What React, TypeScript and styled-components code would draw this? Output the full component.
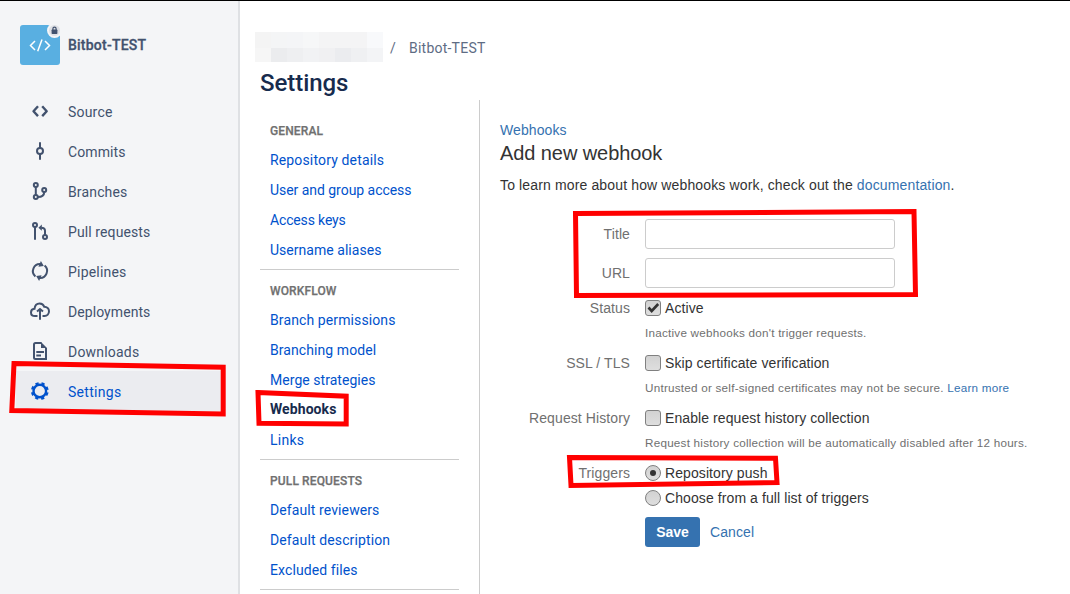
import React from 'react';
import styled, { createGlobalStyle } from 'styled-components';

const GlobalStyle = createGlobalStyle`
  *, *::before, *::after { box-sizing: border-box; }
  body { margin: 0; background: #fff; overflow: hidden; }
  a { text-decoration: none; }
`;

const roboto = `Roboto, 'Noto Sans', sans-serif`;
const liberation = `'Liberation Sans', Arial, sans-serif`;

const Page = styled.div`
  position: relative;
  display: flex;
  width: 1070px;
  height: 594px;
  overflow: hidden;
  border-top: 1px solid #000;
  font-family: ${roboto};
  font-size: 14px;
`;

const Sidebar = styled.aside`
  flex: 0 0 240px;
  padding: 24px 14px 0 16px;
  background: #f4f5f7;
  border-right: 2px solid #dfe1e4;
`;

const RepoHeader = styled.div`
  display: flex;
  align-items: center;
  gap: 8px;
  height: 40px;
  padding-left: 4px;
`;

const RepoAvatar = styled.div`
  position: relative;
  width: 40px;
  height: 40px;
  border-radius: 3px;
  background: #59afe1;
`;

const LockBadge = styled.span`
  position: absolute;
  top: -2px;
  right: -2px;
  display: flex;
  width: 15px;
  height: 15px;
`;

const RepoName = styled.span`
  color: #42526e;
  font-weight: 500;
  line-height: 20px;
  letter-spacing: 0.23px;
  -webkit-text-stroke: 0.3px #42526e;
`;

const SideNav = styled.nav`
  display: flex;
  flex-direction: column;
  margin-top: 26px;
`;

const SideLink = styled.a<{ $active?: boolean }>`
  display: flex;
  align-items: center;
  gap: 16px;
  height: 40px;
  padding-left: 12px;
  color: ${(p) => (p.$active ? '#0052cc' : '#42526e')};
  background: ${(p) => (p.$active ? '#ebecf0' : 'transparent')};
`;

const SideLabel = styled.span<{ $spacing?: number }>`
  padding-top: 2px;
  line-height: 20px;
  letter-spacing: ${(p) => p.$spacing ?? 0}px;
`;

const Content = styled.main`
  display: flex;
  flex-direction: column;
  flex: 1;
  min-width: 0;
`;

const Breadcrumbs = styled.div`
  display: flex;
  align-items: center;
  height: 30px;
  margin: 31px 0 0 15px;
  color: #5e6c84;
  letter-spacing: 0.23px;
`;

const Redacted = styled.div`
  display: grid;
  grid-template-columns: repeat(8, 16px);
  grid-template-rows: 16px 14px;
`;

const RedactedCell = styled.span<{ $tone: string }>`
  background: ${(p) => p.$tone};
`;

const Slash = styled.span`
  width: 26px;
  padding: 2px 0 0 7px;
`;

const Crumb = styled.span`
  padding-top: 2px;
`;

const PageTitle = styled.h1`
  margin: 7px 0 0 20px;
  color: #172b4d;
  font-size: 24px;
  font-weight: 500;
  line-height: 28px;
  letter-spacing: -0.05px;
`;

const Columns = styled.div`
  display: flex;
  flex: 1;
  margin-top: 3px;
`;

const SettingsNav = styled.nav`
  flex: 0 0 240px;
  padding: 10px 20px 0;
  border-right: 1px solid #ccc;
`;

const NavGroup = styled.section`
  padding: 0 10px 4px;
  border-bottom: 1px solid #ccc;
`;

const NavHeading = styled.h2`
  height: 35px;
  margin: 0;
  padding-top: 12px;
  color: #707070;
  font-size: 12px;
  font-weight: 500;
  line-height: 18px;
  letter-spacing: 0.13px;
  text-transform: uppercase;
  -webkit-text-stroke: 0.25px #707070;
`;

const NavLink = styled.a<{ $active?: boolean; $spacing: number }>`
  display: block;
  height: 30px;
  padding-top: ${(p) => (p.$active ? 4 : 5)}px;
  color: ${(p) => (p.$active ? '#172b4d' : '#0052cc')};
  font-weight: ${(p) => (p.$active ? 700 : 400)};
  line-height: 20px;
  letter-spacing: ${(p) => p.$spacing}px;
`;

const Panel = styled.section`
  flex: 1;
  padding: 20px 0 0 20px;
  color: #333;
  font-family: ${liberation};
  letter-spacing: 0.09px;
`;

const TextLink = styled.a`
  color: #3572b0;
`;

const PanelTitle = styled.h2`
  margin: 0;
  color: #333;
  font-size: 20px;
  font-weight: 400;
  line-height: 26px;
  letter-spacing: -0.08px;
`;

const Line = styled.p`
  margin: 0;
  line-height: 20px;
`;

const Intro = styled(Line)`
  margin-top: 9px;
  letter-spacing: 0.14px;
`;

const Form = styled.form`
  display: flex;
  flex-direction: column;
  margin-top: 24px;
`;

const Field = styled.div<{ $height: number }>`
  display: grid;
  grid-template-columns: 130px 1fr;
  column-gap: 15px;
  align-content: start;
  height: ${(p) => p.$height}px;
`;

const FieldLabel = styled.label<{ $offset?: number }>`
  padding-top: ${(p) => p.$offset ?? 0}px;
  color: #707070;
  line-height: 20px;
  text-align: right;
`;

const TextInput = styled.input`
  width: 250px;
  height: 30px;
  padding: 4px;
  border: 1px solid #ccc;
  border-radius: 3px;
  background: #fff;
`;

const Option = styled.label`
  display: flex;
  align-items: center;
  gap: 4px;
  height: 20px;
  line-height: 20px;
  white-space: nowrap;
`;

const Box = styled.span<{ $round?: boolean }>`
  display: flex;
  align-items: center;
  justify-content: center;
  width: 16px;
  height: 16px;
  border: 1px solid #808080;
  border-radius: ${(p) => (p.$round ? '50%' : '3px')};
  background: linear-gradient(#d2d2d2, #dedede);
`;

const Dot = styled.span`
  width: 6px;
  height: 6px;
  border-radius: 50%;
  background: #333;
`;

const Help = styled.p`
  margin: 5px 0 0;
  color: #707070;
  font-size: 11.7px;
  line-height: 20px;
  letter-spacing: 0.23px;
  white-space: nowrap;
`;

const Stack = styled.div<{ $gap?: number }>`
  display: flex;
  flex-direction: column;
  gap: ${(p) => p.$gap ?? 0}px;
`;

const Actions = styled.div`
  display: flex;
  align-items: center;
  gap: 10px;
  padding-left: 145px;
`;

const SaveButton = styled.button`
  width: 55px;
  height: 30px;
  padding: 0;
  border: 0;
  border-radius: 3px;
  background: #3572b0;
  color: #fff;
  font: 700 14px/20px ${liberation};
`;

const Annotations = styled.svg`
  position: absolute;
  top: -1px;
  left: 0;
  pointer-events: none;
`;

const Icon = ({ children }: { children: React.ReactNode }) => (
  <svg width="24" height="24" viewBox="0 0 24 24" fill="none" stroke="currentColor" strokeWidth="2">
    {children}
  </svg>
);

const sideItems = [
  {
    label: 'Source',
    spacing: 0.2,
    icon: (
      <path
        d="M10 7.300 5.500 12.200 10 17.100M14.200 7.300l4.500 4.900-4.500 4.900"
        strokeWidth="2.400"
        strokeLinejoin="round"
      />
    ),
  },
  {
    label: 'Commits',
    spacing: 0.1,
    icon: (
      <>
        <circle cx="12" cy="12" r="3" />
        <path d="M12 3.300V9M12 15v5.700" />
      </>
    ),
  },
  {
    label: 'Branches',
    spacing: 0.15,
    icon: (
      <>
        <circle cx="7.800" cy="6" r="2" />
        <circle cx="7.800" cy="18" r="2" />
        <circle cx="16.200" cy="11" r="2" />
        <path d="M7.800 8v8M16.200 13c0 3.200-2.200 5-6.400 5" />
      </>
    ),
  },
  {
    label: 'Pull requests',
    spacing: 0.1,
    icon: (
      <>
        <circle cx="7" cy="6" r="2" />
        <circle cx="17" cy="18" r="2" />
        <path d="M7 8v12.700M17 16v-4.300c0-2-1.200-3-3.800-3" />
        <path d="M13.800 5.600v6.200L10.400 8.700z" fill="currentColor" stroke="none" />
      </>
    ),
  },
  {
    label: 'Pipelines',
    spacing: 0.2,
    icon: (
      <>
        <path d="M7.400 17.400A7 7 0 0 1 12.500 5.100M16.600 6.600A7 7 0 0 1 11.500 18.900" />
        <path d="M12.900 2l2.900 5-5.400.8zM11.100 22l-2.900-5 5.400-.8z" fill="currentColor" stroke="none" />
      </>
    ),
  },
  {
    label: 'Deployments',
    spacing: 0.07,
    icon: (
      <>
        <path d="M9.500 17H7c-2.400 0-4-1.500-4-3.600 0-2 1.500-3.400 3.500-3.600C6.900 6.500 8.800 4.500 11.600 4.500c2.200 0 3.900 1.200 4.600 3.200C19 7.800 21 9.700 21 12.300 21 15 19.200 17 16.500 17h-2" />
        <path d="M12 10.500v10.300M9 12.600l3-2.600 3 2.600" />
      </>
    ),
  },
  {
    label: 'Downloads',
    spacing: 0.2,
    icon: (
      <>
        <path d="M13.500 4H7.500C6.600 4 6 4.600 6 5.500v13c0 .9.600 1.500 1.500 1.500H18V9" />
        <path d="M13 3l6 6h-6z" fill="currentColor" stroke="none" />
        <path d="M8.300 13H16M8.300 16.500H13" />
      </>
    ),
  },
  {
    label: 'Settings',
    spacing: 0.3,
    active: true,
    icon: (
      <>
        <circle cx="11.800" cy="12" r="6.300" strokeWidth="2.400" />
        <circle cx="11.800" cy="12" r="7.700" strokeWidth="2.400" strokeDasharray="3.200 2.848" strokeDashoffset="-1.424" />
      </>
    ),
  },
];

const redactedTones = [
  '#f4f4f4', '#f4f5f6', '#f4f5f7', '#f6f7f8', '#f4f4f5', '#f4f4f5', '#f4f4f5', '#f8f9fb',
  '#f6f6f6', '#ebecee', '#eeeff1', '#f1f2f4', '#f0f0f2', '#ebecef', '#eff0f2', '#f3f4f6',
];

const groups = [
  {
    heading: 'General',
    links: [
      { label: 'Repository details', spacing: 0.15 },
      { label: 'User and group access', spacing: -0.04 },
      { label: 'Access keys', spacing: -0.15 },
      { label: 'Username aliases', spacing: 0.03 },
    ],
  },
  {
    heading: 'Workflow',
    links: [
      { label: 'Branch permissions', spacing: 0.11 },
      { label: 'Branching model', spacing: 0.08 },
      { label: 'Merge strategies', spacing: 0.04 },
      { label: 'Webhooks', spacing: 0.08, active: true },
      { label: 'Links', spacing: 0.25 },
    ],
  },
  {
    heading: 'Pull requests',
    links: [
      { label: 'Default reviewers', spacing: 0.1 },
      { label: 'Default description', spacing: 0.12 },
      { label: 'Excluded files', spacing: 0.1 },
    ],
  },
];

export default function App() {
  return (
    <Page>
      <GlobalStyle />
      <Sidebar>
        <RepoHeader>
          <RepoAvatar>
            <svg width="40" height="40" viewBox="0 0 40 40" fill="none" stroke="#fff" strokeWidth="1.500">
              <path d="M15 16l-4.500 4.500L15 25M25 16l4.500 4.500L25 25M22 14.500l-4.300 11.800" />
            </svg>
            <LockBadge>
              <svg width="15" height="15" viewBox="0 0 15 15">
                <circle cx="7.500" cy="7.500" r="7.500" fill="#f4f5f7" />
                <circle cx="7.500" cy="7.500" r="5.500" fill="#dfe1e6" />
                <rect x="4.600" y="6.500" width="5.800" height="4.500" rx="0.700" fill="#42526e" />
                <path d="M5.900 7V5.700a1.600 1.600 0 0 1 3.200 0V7" fill="none" stroke="#42526e" strokeWidth="1.200" />
              </svg>
            </LockBadge>
          </RepoAvatar>
          <RepoName>Bitbot-TEST</RepoName>
        </RepoHeader>
        <SideNav>
          {sideItems.map((item) => (
            <SideLink key={item.label} $active={item.active}>
              <Icon>{item.icon}</Icon>
              <SideLabel $spacing={item.spacing}>{item.label}</SideLabel>
            </SideLink>
          ))}
        </SideNav>
      </Sidebar>
      <Content>
        <Breadcrumbs>
          <Redacted>
            {redactedTones.map((tone, i) => (
              <RedactedCell key={i} $tone={tone} />
            ))}
          </Redacted>
          <Slash>/</Slash>
          <Crumb>Bitbot-TEST</Crumb>
        </Breadcrumbs>
        <PageTitle>Settings</PageTitle>
        <Columns>
          <SettingsNav>
            {groups.map((group) => (
              <NavGroup key={group.heading}>
                <NavHeading>{group.heading}</NavHeading>
                {group.links.map((link) => (
                  <NavLink key={link.label} $active={link.active} $spacing={link.spacing}>
                    {link.label}
                  </NavLink>
                ))}
              </NavGroup>
            ))}
          </SettingsNav>
          <Panel>
            <Line>
              <TextLink>Webhooks</TextLink>
            </Line>
            <PanelTitle>Add new webhook</PanelTitle>
            <Intro>
              To learn more about how webhooks work, check out the <TextLink>documentation</TextLink>.
            </Intro>
            <Form>
              <Field $height={39}>
                <FieldLabel $offset={5}>Title</FieldLabel>
                <TextInput type="text" />
              </Field>
              <Field $height={40}>
                <FieldLabel $offset={5}>URL</FieldLabel>
                <TextInput type="text" />
              </Field>
              <Field $height={55}>
                <FieldLabel>Status</FieldLabel>
                <Stack>
                  <Option>
                    <Box>
                      <svg width="14" height="14" viewBox="0 0 14 14" fill="none" stroke="#333" strokeWidth="2.600">
                        <path d="M2.500 6.500l3.200 3.500 6.500-7" />
                      </svg>
                    </Box>
                    Active
                  </Option>
                  <Help>Inactive webhooks don't trigger requests.</Help>
                </Stack>
              </Field>
              <Field $height={55}>
                <FieldLabel>SSL / TLS</FieldLabel>
                <Stack>
                  <Option>
                    <Box />
                    Skip certificate verification
                  </Option>
                  <Help>
                    Untrusted or self-signed certificates may not be secure. <TextLink>Learn more</TextLink>
                  </Help>
                </Stack>
              </Field>
              <Field $height={55}>
                <FieldLabel>Request History</FieldLabel>
                <Stack>
                  <Option>
                    <Box />
                    Enable request history collection
                  </Option>
                  <Help>Request history collection will be automatically disabled after 12 hours.</Help>
                </Stack>
              </Field>
              <Field $height={54}>
                <FieldLabel>Triggers</FieldLabel>
                <Stack $gap={5}>
                  <Option>
                    <Box $round>
                      <Dot />
                    </Box>
                    Repository push
                  </Option>
                  <Option>
                    <Box $round />
                    Choose from a full list of triggers
                  </Option>
                </Stack>
              </Field>
              <Actions>
                <SaveButton type="button">Save</SaveButton>
                <TextLink>Cancel</TextLink>
              </Actions>
            </Form>
          </Panel>
        </Columns>
      </Content>
      <Annotations width="1070" height="594" viewBox="0 0 1070 594" fill="none" stroke="#f00" strokeWidth="5">
        <path d="M14 363.500 223.200 367.200V414L11.800 410.500z" />
        <path d="M258 392.500 346.200 396.200V424L259 423.200z" />
        <path d="M575.500 213.500 914 211.500 915.500 294.500 576.500 295.500z" />
        <path d="M569.500 457.500 775.500 458.200 777 482.500 571 485.500z" />
      </Annotations>
    </Page>
  );
}
